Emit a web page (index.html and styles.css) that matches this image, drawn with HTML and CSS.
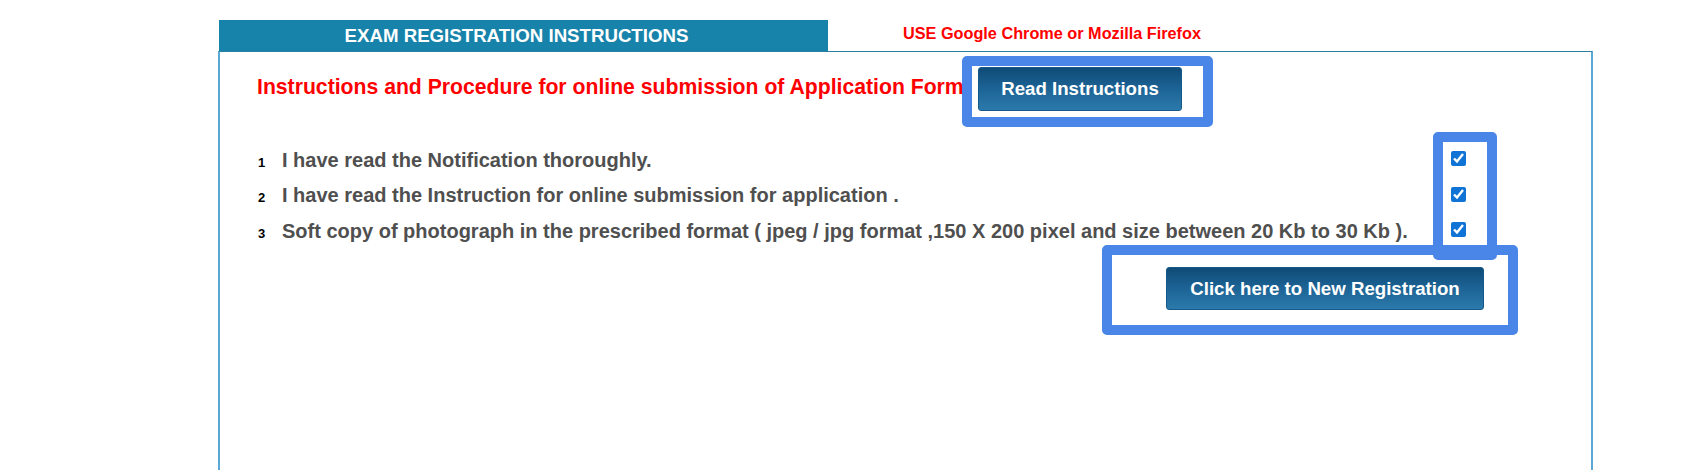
FILE: index.html
```html
<!DOCTYPE html>
<html lang="en">
<head>
<meta charset="utf-8">
<title>Exam Registration Instructions</title>
<link rel="stylesheet" href="styles.css">
</head>
<body>
<div class="page">
  <div class="header">
    <div class="tab">EXAM REGISTRATION INSTRUCTIONS</div>
    <div class="notice">USE Google Chrome or Mozilla Firefox</div>
  </div>
  <div class="panel">
    <div class="intro">
      <div class="intro-title">Instructions and Procedure for online submission of Application Form</div>
      <button class="btn btn-read" type="button">Read Instructions</button>
    </div>
    <div class="checklist">
      <ol class="items">
        <li class="item"><span class="num">1</span><span class="text">I have read the Notification thoroughly.</span></li>
        <li class="item"><span class="num">2</span><span class="text">I have read the Instruction for online submission for application .</span></li>
        <li class="item"><span class="num">3</span><span class="text">Soft copy of photograph in the prescribed format ( jpeg / jpg format ,150 X 200 pixel and size between 20 Kb to 30 Kb ).</span></li>
      </ol>
      <div class="checks">
        <input class="check" type="checkbox" checked>
        <input class="check" type="checkbox" checked>
        <input class="check" type="checkbox" checked>
      </div>
    </div>
    <div class="actions">
      <button class="btn btn-register" type="button">Click here to New Registration</button>
    </div>
  </div>
</div>
<div class="mark mark-read"></div>
<div class="mark mark-checks"></div>
<div class="mark mark-register"></div>
</body>
</html>
```

FILE: styles.css
```css
html, body {
  margin: 0;
  padding: 0;
  background: #ffffff;
  overflow: hidden;
}

body {
  width: 1686px;
  height: 470px;
  font-family: "Liberation Sans", Arial, sans-serif;
}

.page {
  padding-left: 218px;
  padding-top: 20px;
  width: 1375px;
}

.header {
  display: flex;
  align-items: flex-start;
  height: 31px;
}

.tab {
  width: 609px;
  height: 31px;
  margin-left: 1px;
  box-sizing: border-box;
  padding-right: 14px;
  background: #1783aa;
  color: #ffffff;
  font-weight: bold;
  font-size: 18.67px;
  line-height: 31px;
  text-align: center;
  white-space: nowrap;
}

.notice {
  padding-left: 75px;
  color: #ff0000;
  font-weight: bold;
  font-size: 16.25px;
  line-height: 26px;
  white-space: nowrap;
}

.panel {
  box-sizing: border-box;
  width: 1375px;
  height: 419px;
  border-top: 1px solid #2a7fa3;
  border-left: 2px solid #5aa9d5;
  border-right: 2px solid #5aa9d5;
  padding: 15px 0 0 36px;
}

.intro {
  display: flex;
  align-items: flex-start;
  height: 44px;
}

.intro-title {
  width: 685px;
  flex: none;
  margin-left: 1px;
  margin-top: 8px;
  color: #ff0000;
  font-weight: bold;
  font-size: 21.2px;
  line-height: 24px;
  white-space: nowrap;
}

.btn {
  box-sizing: border-box;
  border: 1px solid #14598a;
  border-radius: 3px;
  background: linear-gradient(to bottom, #0f4b77 0%, #1d6496 50%, #2b7aab 100%);
  color: #ffffff;
  font-family: "Liberation Sans", Arial, sans-serif;
  font-weight: bold;
  font-size: 18.67px;
  margin: 0;
  white-space: nowrap;
  text-align: center;
}

.btn-read {
  flex: none;
  height: 44px;
  line-height: 42px;
  width: 204px;
  padding: 0;
  margin-left: 36px;
}

.checklist {
  display: flex;
  align-items: flex-start;
  margin-top: 31.8px;
  padding-right: 125px;
}

.items {
  list-style: none;
  margin: 0;
  padding: 0;
  flex: 1;
}

.item {
  display: flex;
  align-items: baseline;
  height: 35.5px;
  line-height: 35.5px;
}

.num {
  width: 24px;
  padding-left: 2px;
  flex: none;
  color: #000000;
  font-weight: bold;
  font-size: 13px;
}

.text {
  color: #4f4f4f;
  font-weight: bold;
  font-size: 20px;
  white-space: nowrap;
}

.checks {
  display: flex;
  flex-direction: column;
  gap: 20.85px;
  padding-top: 7.9px;
  width: 15px;
}

.check {
  width: 15px;
  height: 15px;
  margin: 0;
  accent-color: #0f74d6;
}

.actions {
  display: flex;
  justify-content: flex-end;
  margin-top: 17.7px;
  padding-right: 107px;
}

.btn-register {
  height: 43px;
  line-height: 41px;
  width: 318px;
  padding: 0;
}

.mark {
  position: absolute;
  box-sizing: border-box;
  border: 10px solid #4a86e8;
  border-radius: 5px;
}

.mark-read {
  left: 962px;
  top: 56px;
  width: 251px;
  height: 71px;
}

.mark-checks {
  left: 1433px;
  top: 132px;
  width: 64px;
  height: 128px;
}

.mark-register {
  left: 1102px;
  top: 245px;
  width: 416px;
  height: 90px;
}
```
